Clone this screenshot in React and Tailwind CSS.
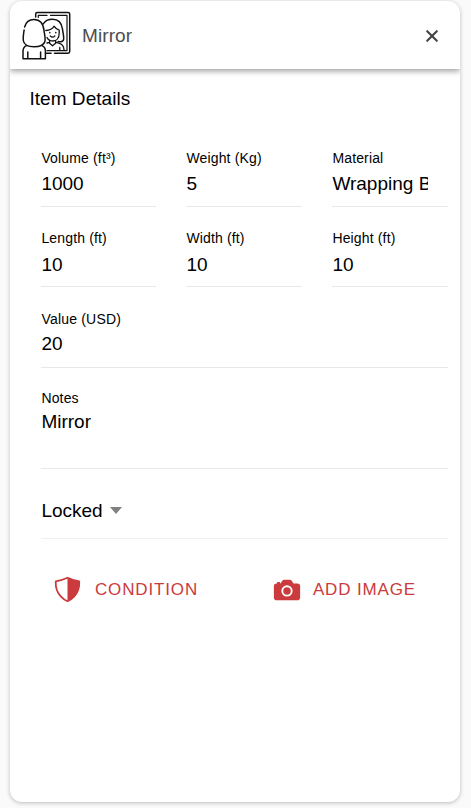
import { IoCamera, IoClose, IoShieldHalf } from "react-icons/io5";

const DIMENSIONS = [
  [
    { label: "Volume (ft³)", value: "1000" },
    { label: "Weight (Kg)", value: "5" },
    { label: "Material", value: "Wrapping B" },
  ],
  [
    { label: "Length (ft)", value: "10" },
    { label: "Width (ft)", value: "10" },
    { label: "Height (ft)", value: "10" },
  ],
];

function MirrorIcon() {
  return (
    <svg
      viewBox="0 0 54 54"
      className="h-[54px] w-[54px] shrink-0"
      fill="none"
      stroke="#111"
      strokeWidth="1.5"
      strokeLinecap="round"
      strokeLinejoin="round"
    >
      {/* frame */}
      <path d="M15.7 9V6Q15.7 4.4 17.3 4.4H48Q49.7 4.4 49.7 6V43.6Q49.7 45.2 48 45.2H34.5M31 45.2H26.5" />
      <path d="M18.3 9.5V7.4H27M30.5 7.4H47V42.6H27" strokeWidth="1.2" />
      {/* reflection */}
      <path d="M23.2 16C25 12.8 28.5 11.2 32.5 11.2C39 11.2 41.8 16 42.5 21C43 26 44.7 30.5 43.2 32.5C42.2 34 40.2 34 38.2 33.6" />
      <path d="M25.8 22.5C29.8 22.3 32.5 20.8 34 18.2C35.5 20.5 37 21.5 39.2 22.2V25C39.2 30 36.5 33 32.8 33C30 33 28 31.5 27 29.5" strokeWidth="1.3" />
      <path d="M30.3 28Q32.5 30.2 34.9 28" strokeWidth="1.2" />
      <path d="M29.8 24.4V24.8M35.8 24.4V24.8" strokeWidth="1.5" />
      <path d="M29.6 33V35.2L32.5 37.8L35.6 35.2V33M27 35L29.6 34.4M35.6 34.2L39.5 35.4C42.5 36.4 43.8 38.5 44 41.8M39.8 39.5V42" strokeWidth="1.3" />
      {/* person seen from behind */}
      <path d="M4.6 19C5.8 14.3 9.2 11.4 14 11.4C20.5 11.4 23.4 16.5 24 22.5C24.4 26.5 25.8 30 25 33.2C24 37 19.5 38.7 14 38.7C8 38.7 3.9 36.8 3.3 32.5C2.9 29.5 3.5 26 4.1 22" />
      <path d="M6.4 37.6C4 38.8 3 40.5 3 43V50.8H25.4V43C25.4 40.5 24.3 38.5 22 37.6M7.8 44V50.5M20.6 44V50.5" />
    </svg>
  );
}

function Field({ label, value, valueClass }) {
  return (
    <div className="h-[57px] border-b border-[#e8e8e8]">
      <p className="text-sm leading-[16px] tracking-[0.15px]">{label}</p>
      <p className={`mr-[20px] overflow-hidden whitespace-nowrap text-[19px] leading-[24px] ${valueClass}`}>
        {value}
      </p>
    </div>
  );
}

export default function App() {
  return (
    <div className="h-[808px] bg-[#fafafa] px-[10px] pt-px font-['Liberation_Sans',Arial,sans-serif] text-black">
      <div className="flex h-[801px] w-[450px] flex-col overflow-hidden rounded-[12px] bg-white shadow-[0_1px_4px_rgba(0,0,0,0.25)]">
        <header className="flex h-[68px] shrink-0 items-center pl-[10px] pr-[17px] shadow-[0_2px_6px_rgba(0,0,0,0.4)]">
          <MirrorIcon />
          <h1 className="ml-2 flex-1 pt-[2px] text-[19px] tracking-[0.1px] text-[#4d4d4d]">Mirror</h1>
          <button aria-label="Close" className="cursor-pointer text-[#424242]">
            <IoClose className="mt-px h-[22px] w-[22px]" />
          </button>
        </header>

        <main className="pl-[31.4px] pr-[12px]">
          <h2 className="-ml-[12px] mt-[18px] text-[19px] leading-[24px] tracking-[0.05px]">Item Details</h2>

          <div className="mt-[39px] grid grid-cols-[115px_116px_116px] gap-x-[30px] gap-y-[23px]">
            {DIMENSIONS.map((row, i) =>
              row.map((field) => (
                <Field key={field.label} {...field} valueClass={i === 0 ? "mt-[6px]" : "mt-[7px]"} />
              ))
            )}
          </div>

          <div className="mt-[24px] h-[57px] border-b border-[#e8e8e8]">
            <p className="text-sm leading-[16px] tracking-[0.2px]">Value (USD)</p>
            <p className="mt-[5px] text-[19px] leading-[24px]">20</p>
          </div>

          <div className="mt-[22px] h-[79px] border-b border-[#e8e8e8]">
            <p className="text-sm leading-[16px] tracking-[0.15px]">Notes</p>
            <p className="mt-[4px] text-[19px] leading-[24px]">Mirror</p>
          </div>

          <div className="flex h-[70px] items-center border-b border-[#f0f0f0] pt-[15px]">
            <span className="text-[19px] leading-[24px]">Locked</span>
            <span className="mb-[2px] ml-[7px] border-x-[6px] border-t-[7px] border-x-transparent border-t-[#808080]" />
          </div>

          <div className="mt-[35px] flex items-center text-[17px] leading-[28px] tracking-[0.85px] text-[#cb3a3c]">
            <button className="ml-[12px] flex w-[219px] cursor-pointer items-center gap-[12.6px]">
              <IoShieldHalf className="h-[29px] w-[29px]" />
              CONDITION
            </button>
            <button className="flex cursor-pointer items-center gap-[10.5px]">
              <IoCamera className="mt-px h-[30px] w-[30px]" />
              ADD IMAGE
            </button>
          </div>
        </main>
      </div>
    </div>
  );
}
